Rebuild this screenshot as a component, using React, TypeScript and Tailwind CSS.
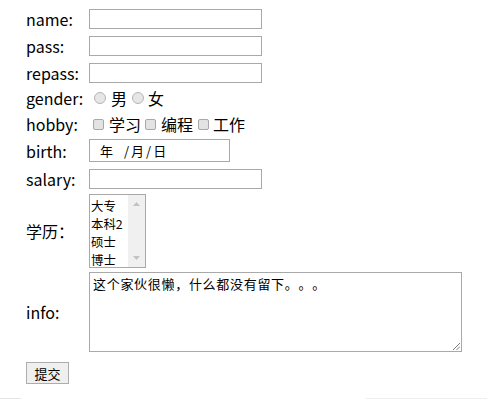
import React from "react";

const font = { fontFamily: '"Noto Sans CJK SC", "Noto Sans", sans-serif' };

function Label({ children }: { children: React.ReactNode }) {
  return <div className="w-[63px] shrink-0 text-[16px] leading-none text-black">{children}</div>;
}

function Radio() {
  return (
    <span className="inline-block h-[12px] w-[12px] rounded-full border border-[#b5b5b5] bg-[#e6e6e6]" />
  );
}

function Check() {
  return (
    <span className="inline-block h-[11px] w-[11px] rounded-[2px] border border-[#a8a8a8] bg-[#e3e3e3]" />
  );
}

function TextBox() {
  return <div className="h-[20px] w-[173px] border border-[#a9a9a9] bg-white" />;
}

export default function App() {
  return (
    <div
      className="w-[487px] h-[399px] overflow-hidden bg-white pl-[26px] pt-[9px] text-black [text-spacing-trim:space-all]"
      style={font}
    >
      <div className="flex h-[20px] items-center">
        <Label>name:</Label>
        <TextBox />
      </div>
      <div className="mt-[7px] flex h-[20px] items-center">
        <Label>pass:</Label>
        <TextBox />
      </div>
      <div className="mt-[7px] flex h-[20px] items-center">
        <Label>repass:</Label>
        <TextBox />
      </div>
      <div className="mt-[5px] flex h-[20px] items-center">
        <Label>gender:</Label>
        <div className="ml-[5px] flex items-center text-[16px] leading-none">
          <Radio />
          <span className="ml-[5px]">男</span>
          <span className="ml-[5px] flex"><Radio /></span>
          <span className="ml-[4px]">女</span>
        </div>
      </div>
      <div className="mt-[6px] flex h-[20px] items-center">
        <Label>hobby:</Label>
        <div className="ml-[4px] flex items-center text-[16px] leading-none">
          <Check />
          <span className="ml-[5px]">学习</span>
          <span className="ml-[4px] flex"><Check /></span>
          <span className="ml-[5px]">编程</span>
          <span className="ml-[5px] flex"><Check /></span>
          <span className="ml-[4px]">工作</span>
        </div>
      </div>
      <div className="mt-[5px] flex h-[23px] items-center">
        <Label>birth:</Label>
        <div className="flex h-[23px] w-[141px] items-center border border-[#a9a9a9] bg-white pl-[10px] text-[13px] leading-none">
          <span>年</span>
          <span className="ml-[11px] tracking-[2px]">/月/日</span>
        </div>
      </div>
      <div className="mt-[7px] flex h-[20px] items-center">
        <Label>salary:</Label>
        <TextBox />
      </div>
      <div className="mt-[5px] flex h-[74px] items-center">
        <Label>学历：</Label>
        <div className="flex h-[74px] w-[57px] border border-[#a9a9a9] bg-white">
          <div className="flex flex-1 flex-col pl-[1px] pt-[2px] text-[12.4px] leading-[18px]">
            <div className="h-[18px]">大专</div>
            <div className="h-[18px]">本科2</div>
            <div className="h-[18px]">硕士</div>
            <div className="h-[18px]">博士</div>
          </div>
          <div className="flex w-[17px] flex-col items-center justify-between bg-[#f0f0f0] py-[7px]">
            <svg width="7" height="4" viewBox="0 0 7 4"><path d="M0 4 L3.5 0 L7 4 Z" fill="#c2c2c2" /></svg>
            <svg width="7" height="4" viewBox="0 0 7 4"><path d="M0 0 L3.5 4 L7 0 Z" fill="#c2c2c2" /></svg>
          </div>
        </div>
      </div>
      <div className="mt-[4px] flex h-[80px] items-center">
        <Label>info:</Label>
        <div className="relative h-[80px] w-[373px] border border-[#a9a9a9] bg-white pl-[3px] pt-[2px] text-[13px] leading-[17px] tracking-[0.7px] [text-spacing-trim:space-all]">
          这个家伙很懒，什么都没有留下。。。
          <svg className="absolute bottom-[1px] right-[1px]" width="8" height="8" viewBox="0 0 8 8">
            <path d="M1 8 L8 1 M4.5 8 L8 4.5" stroke="#7a7a7a" strokeWidth="1" />
          </svg>
        </div>
      </div>
      <div className="mt-[10px] flex">
        <button className="h-[22px] w-[43px] border border-[#adadad] bg-[#efefef] text-[13px] leading-none text-black">
          提交
        </button>
      </div>
      <div className="relative -ml-[26px] mt-[14px] h-[1px] w-[487px]">
        <div className="absolute left-0 top-0 h-[1px] w-[21px] bg-[#e5e5e5]" />
        <div className="absolute left-[366px] top-0 h-[1px] w-[121px] bg-[#eeeeee]" />
      </div>
    </div>
  );
}
